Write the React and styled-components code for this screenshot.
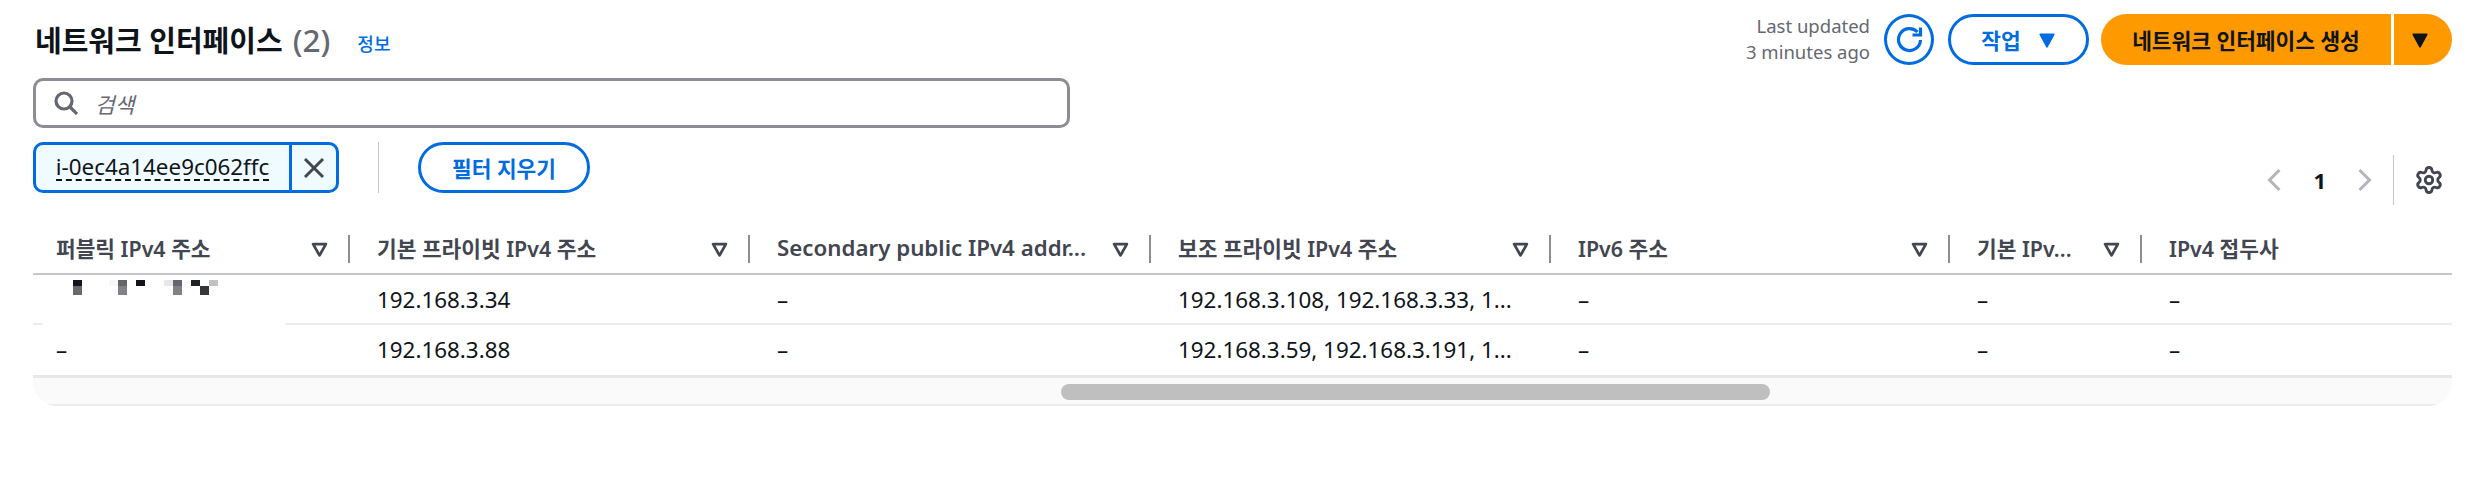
import React from "react";
import styled, { createGlobalStyle } from "styled-components";
import { Settings } from "lucide-react";

const Global = createGlobalStyle`
  html, body { margin: 0; padding: 0; background: #fff; }
  body { font-family: "Noto Sans", "Noto Sans CJK KR", sans-serif; color: #0f141a; }
  * { box-sizing: border-box; }
`;
const Page = styled.div`width: 2490px; height: 486px; padding: 14px 38px 0 33px; overflow: hidden;`;
const Header = styled.header`display: flex; justify-content: space-between; height: 51px;`;
const TitleRow = styled.div`display: flex; align-items: baseline; padding: 7px 0 0 2px;`;
const Title = styled.h1`margin: 0; font-size: 29px; line-height: 38px; font-weight: 700; color: #0f141a;`;
const Count = styled.span`font-size: 31.5px; font-weight: 500; color: #656871; margin-left: 10px;`;
const Info = styled.a`font-size: 18px; font-weight: 500; color: #006ce0; margin-left: 27px; position: relative; top: -1px;`;
const Actions = styled.div`display: flex; align-items: center;`;
const Updated = styled.div`font-size: 18.5px; line-height: 26px; color: #656871; text-align: right; margin-right: 14px; margin-top: -1px;`;
const IconCircle = styled.button`width: 50px; height: 51px; border-radius: 50%; border: 3px solid #006ce0; background: #fff; color: #006ce0; display: flex; align-items: center; justify-content: center; padding: 0; margin-right: 14px;`;
const Pill = styled.button`
  height: 51px; border-radius: 26px; border: 3px solid #006ce0; background: #fff; color: #006ce0;
  font: 700 21.4px "Noto Sans", "Noto Sans CJK KR", sans-serif;
  display: inline-flex; align-items: center; justify-content: center; gap: 17px; padding: 0;
  width: ${p => p.$w}px;
`;
const Split = styled.div`display: flex; width: 351px; height: 51px; margin-left: 12px; gap: 3px;`;
const Primary = styled.button`
  flex: 1; border: 0; background: #ff9900; color: #0f141a; border-radius: 26px 0 0 26px;
  font: 700 21.4px "Noto Sans", "Noto Sans CJK KR", sans-serif; padding: 0;
`;
const PrimaryCaret = styled.button`width: 58px; border: 0; background: #ff9900; color: #0f141a; border-radius: 0 26px 26px 0; display: flex; align-items: center; justify-content: center; padding: 0 6px 0 0;`;
const Search = styled.div`
  width: 1037px; height: 50px; margin-top: 13px; border: 3px solid #8c8c94; border-radius: 10px;
  display: flex; align-items: center; padding-left: 18px; gap: 17px; color: #656871; background: #fff;
`;
const Placeholder = styled.span`font-size: 21.4px; font-style: italic; color: #656871;`;
const FilterRow = styled.div`display: flex; align-items: flex-start; height: 51px; margin-top: 14px;`;
const Token = styled.div`display: flex; width: 306px; height: 51px; border: 3px solid #006ce0; border-radius: 10px; background: #f0fbff; overflow: hidden;`;
const TokenLabel = styled.span`
  width: 256px; flex: none; border-right: 3px solid #006ce0; display: flex; align-items: center; justify-content: center;
  font-size: 22.4px; color: #0f141a;
  & > span { border-bottom: 2px dashed #0f141a; line-height: 25px; white-space: nowrap; }
`;
const TokenClose = styled.span`flex: 1; display: flex; align-items: center; justify-content: center; color: #424650;`;
const VDivider = styled.div`width: 1px; height: 51px; background: #c6c6cd; margin: 0 39px 0 39px;`;
const Pager = styled.div`margin-left: auto; margin-top: 19px; height: 38px; display: flex; align-items: center; color: #b4b4bb;`;
const PageNum = styled.span`font-size: 22px; font-weight: 700; color: #0f141a; margin: 0 32px;`;
const PagerDivider = styled.div`width: 1px; height: 50px; background: #c6c6cd; margin: 0 20px 0 21px;`;
const Gear = styled.span`display: flex; color: #424650; margin-right: 8px;`;
const TableWrap = styled.div`margin-top: 32px; width: 2419px; border-radius: 0 0 24px 24px; overflow: hidden; position: relative;`;
const Row = styled.div`
  display: grid; grid-template-columns: 317px 400px 401px 400px 399px 192px 310px;
  height: ${p => p.$h}px; border-bottom: ${p => p.$bw || 2}px solid ${p => p.$bc};
`;
const HeadCell = styled.div`display: flex; align-items: center; padding-left: ${p => p.$first ? 23 : 27}px; position: relative; font-size: ${p => p.$latin ? 22.3 : 21.4}px; font-weight: 600; color: #424650; white-space: nowrap;`;
const HeadText = styled.span`flex: 1; min-width: 0; overflow: hidden; text-overflow: ellipsis; padding-bottom: 3px;`;
const FilterIcon = styled.span`display: flex; color: #424650; margin: 0 22px 0 8px;`;
const Sep = styled.i`position: absolute; right: 0; top: 10px; height: 28px; width: 2px; background: #8c8c94;`;
const Cell = styled.div`display: flex; align-items: center; padding-left: ${p => p.$first ? 23 : 27}px; font-size: 22.4px; color: #0f141a; white-space: nowrap; padding-bottom: ${p => p.$pb}px;`;
const Mask = styled.div`position: absolute; left: 10px; top: 97px; width: 242px; height: 4px; background: #fff;`;
const Mosaic = styled.svg`position: absolute; left: 40px; top: 55px; display: block;`;
const ScrollTrack = styled.div`height: 28px; background: #fafafa; border-bottom: 2px solid #ebebf0; padding: 6px 0 0 1028px;`;
const Thumb = styled.div`width: 709px; height: 16px; border-radius: 8px; background: #bfbfbf;`;

const Caret = ({ s = 18 }) => (
  <svg width={s} height={s} viewBox="0 0 16 16"><path d="M2 3h12L8 14z" fill="currentColor" stroke="currentColor" strokeWidth="1.5" strokeLinejoin="round" /></svg>
);
const Filter = () => (
  <svg width="17" height="17" viewBox="0 0 16 16" fill="none"><path d="M2 3h12L8 13.5z" stroke="currentColor" strokeWidth="2.6" strokeLinejoin="round" /></svg>
);
const columns = ["퍼블릭 IPv4 주소", "기본 프라이빗 IPv4 주소", "Secondary public IPv4 addr...", "보조 프라이빗 IPv4 주소", "IPv6 주소", "기본 IPv...", "IPv4 접두사"];
const rows = [
  ["", "192.168.3.34", "–", "192.168.3.108, 192.168.3.33, 1...", "–", "–", "–"],
  ["–", "192.168.3.88", "–", "192.168.3.59, 192.168.3.191, 1...", "–", "–", "–"],
];
const pixels = [
  [0, 0, 6, "#11161c"], [0, 6, 9, "#66696e"],
  [36, 0, 6, "#f7f7f7"], [45, 0, 6, "#63666b"], [45, 6, 9, "#7f8286"],
  [63, 0, 6, "#11161c"],
  [91, 0, 6, "#e8e8e8"], [100, 0, 6, "#63666b"], [100, 6, 9, "#7f8286"],
  [118, 0, 6, "#1e2227"], [127, 6, 9, "#33363b"], [136, 0, 6, "#c2c2c2"],
];

export default function App() {
  return (
    <Page>
      <Global />
      <Header>
        <TitleRow>
          <Title>네트워크 인터페이스<Count>(2)</Count></Title>
          <Info>정보</Info>
        </TitleRow>
        <Actions>
          <Updated>Last updated<br />3 minutes ago</Updated>
          <IconCircle>
            <svg width="27" height="27" viewBox="0 0 27 27" fill="none" stroke="currentColor" strokeWidth="3.2"><path d="M24.5 14A11 11 0 1 1 21.5 6" /><path d="M24.5 1.5V9H16.5" /></svg>
          </IconCircle>
          <Pill $w={141}>작업<Caret /></Pill>
          <Split>
            <Primary>네트워크 인터페이스 생성</Primary>
            <PrimaryCaret><Caret /></PrimaryCaret>
          </Split>
        </Actions>
      </Header>
      <Search>
        <svg width="24" height="24" viewBox="0 0 24 24" fill="none" stroke="currentColor" strokeWidth="3.2"><circle cx="10" cy="10" r="8" /><path d="M16 16l7 7" /></svg>
        <Placeholder>검색</Placeholder>
      </Search>
      <FilterRow>
        <Token>
          <TokenLabel><span>i-0ec4a14ee9c062ffc</span></TokenLabel>
          <TokenClose>
            <svg width="24" height="24" viewBox="0 0 24 24" fill="none" stroke="currentColor" strokeWidth="3"><path d="M3 3l18 18M21 3L3 21" /></svg>
          </TokenClose>
        </Token>
        <VDivider />
        <Pill $w={172}>필터 지우기</Pill>
        <Pager>
          <svg width="14" height="24" viewBox="0 0 14 24" fill="none" stroke="currentColor" strokeWidth="3"><path d="M12.5 2L2.5 12l10 10" /></svg>
          <PageNum>1</PageNum>
          <svg width="14" height="24" viewBox="0 0 14 24" fill="none" stroke="currentColor" strokeWidth="3"><path d="M1.5 2l10 10-10 10" /></svg>
          <PagerDivider />
          <Gear><Settings size={30} strokeWidth={2.3} /></Gear>
        </Pager>
      </FilterRow>
      <TableWrap>
        <Row $h={50} $bc="#c6c6cd">
          {columns.map((c, i) => (
            <HeadCell key={c} $first={i === 0} $latin={i === 2}>
              <HeadText>{c}</HeadText>
              {i < 6 && <FilterIcon><Filter /></FilterIcon>}
              {i < 6 && <Sep />}
            </HeadCell>
          ))}
        </Row>
        {rows.map((r, ri) => (
          <Row key={ri} $h={ri === 0 ? 50 : 53} $bc={ri === 0 ? "#ebebf0" : "#e8e8e8"} $bw={ri === 0 ? 2 : 3}>
            {r.map((v, i) => <Cell key={i} $first={i === 0} $pb={ri === 0 ? 0 : 2}>{v}</Cell>)}
          </Row>
        ))}
        <Mask />
        <Mosaic width="145" height="15" viewBox="0 0 145 15">
          {pixels.map(([x, y, h, c]) => <rect key={`${x}-${y}`} x={x} y={y} width="9" height={h} fill={c} />)}
        </Mosaic>
        <ScrollTrack><Thumb /></ScrollTrack>
      </TableWrap>
    </Page>
  );
}
